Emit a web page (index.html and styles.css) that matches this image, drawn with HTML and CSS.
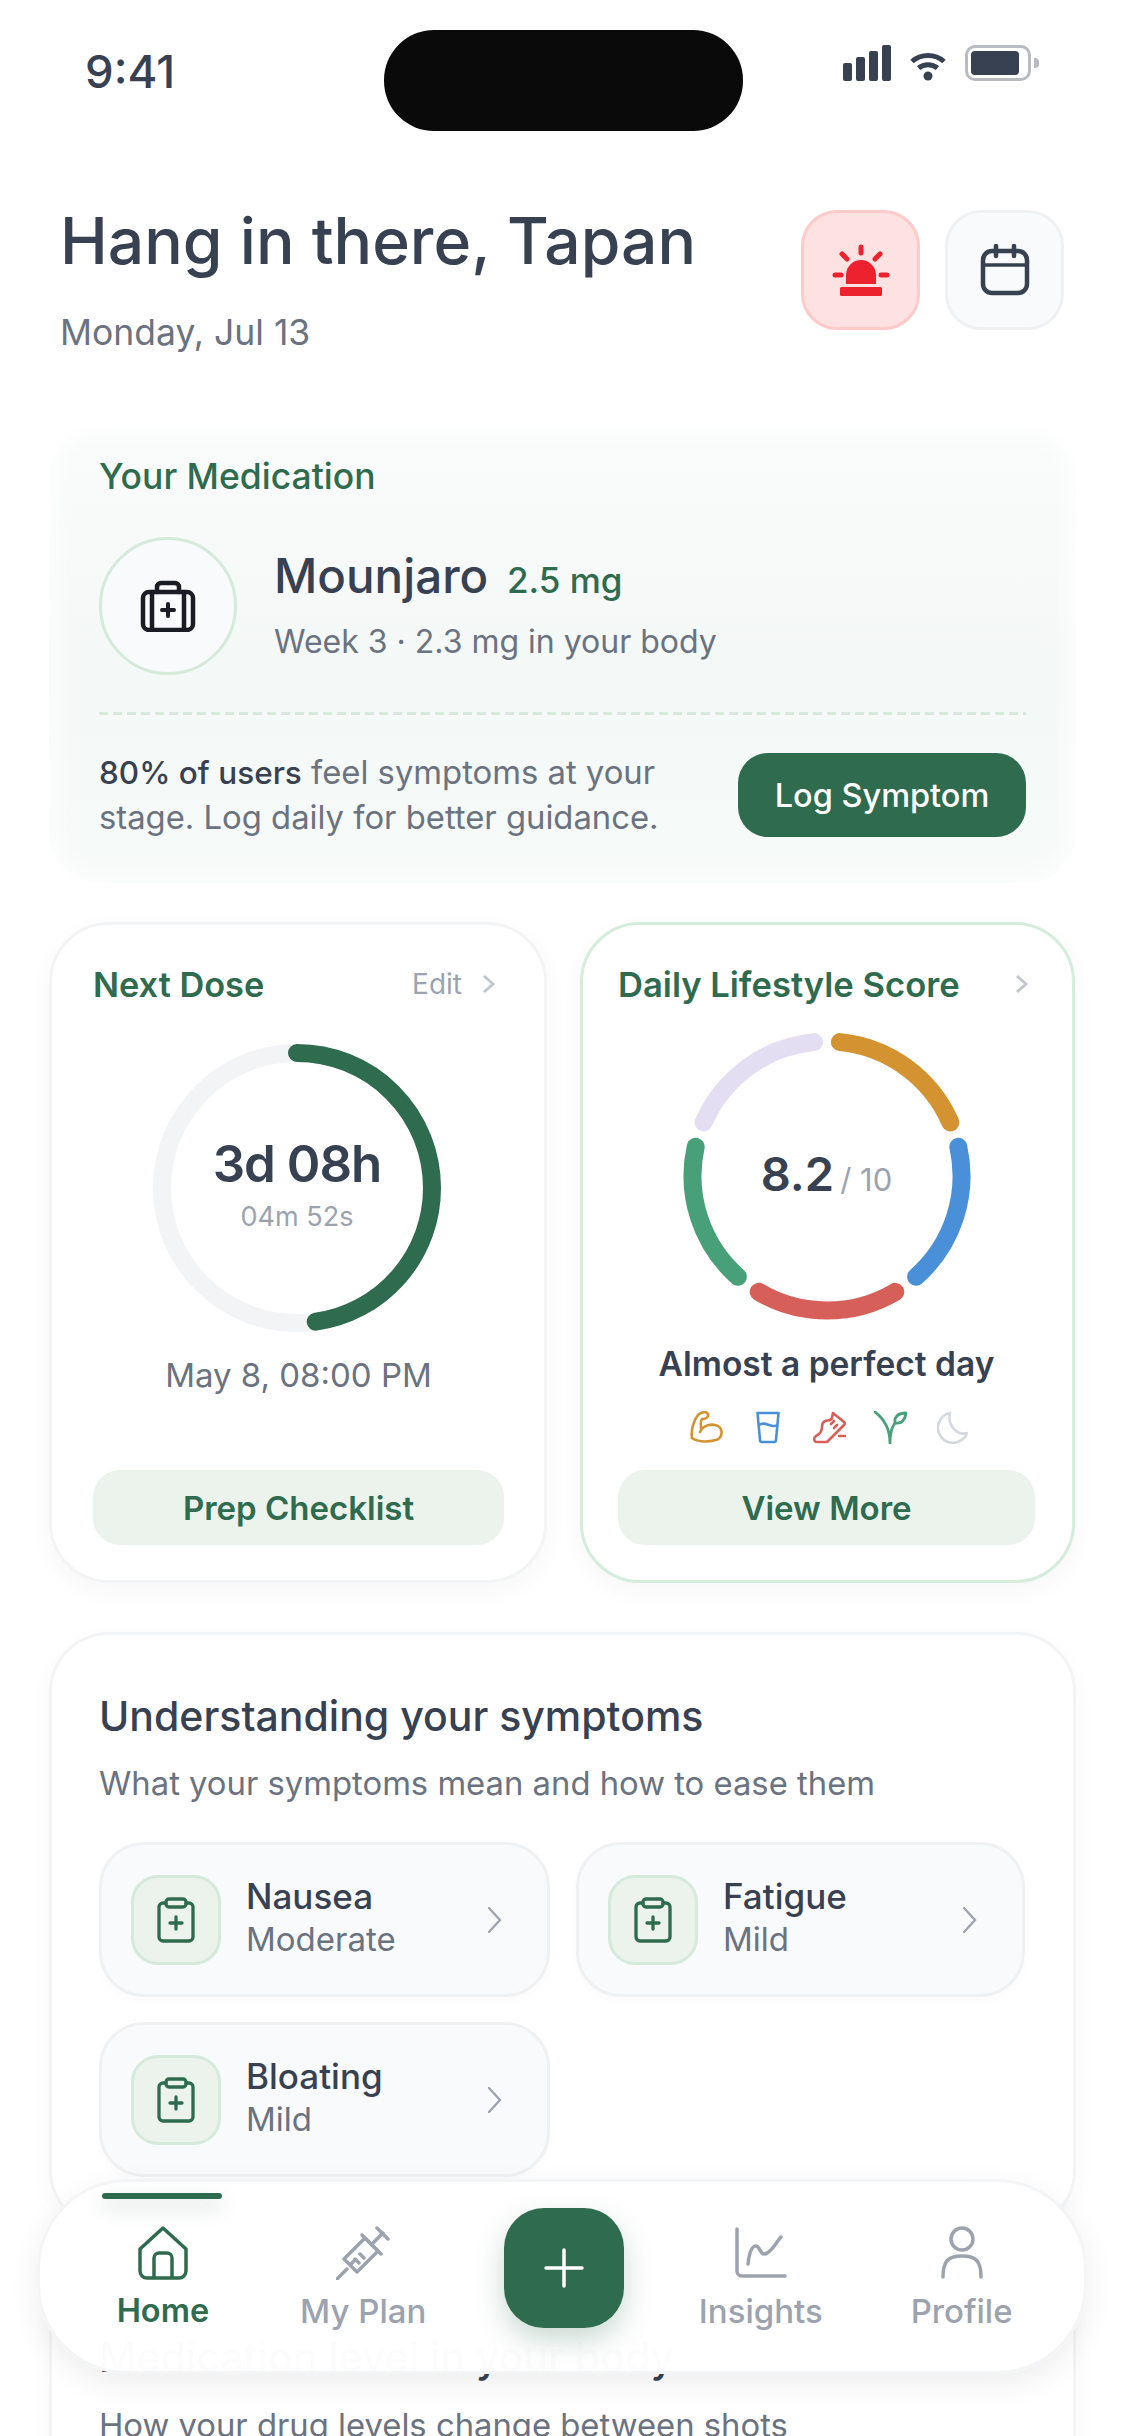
FILE: index.html
```html
<!DOCTYPE html>
<html lang="en">
<head>
<meta charset="utf-8">
<title>Home</title>
<link rel="stylesheet" href="styles.css">
</head>
<body>
<div class="screen">
  <div class="status">
    <div class="time">9:41</div>
    <div class="island"></div>
    <div class="status-icons">
      <svg class="signal" width="48" height="36" viewBox="0 0 48 36"><rect x="0" y="18" width="9" height="18" rx="2"/><rect x="13" y="12" width="9" height="24" rx="2"/><rect x="26" y="6" width="9" height="30" rx="2"/><rect x="39" y="0" width="9" height="36" rx="2"/></svg>
      <svg class="wifi" width="36" height="30" viewBox="0 0 36 30"><path d="M2 10.500C11 2.500 25 2.500 34 10.500M8.500 17C14 12.500 22 12.500 27.500 17" fill="none" stroke="#374151" stroke-width="5"/><circle cx="18" cy="25" r="4.500" fill="#374151"/></svg>
      <div class="battery"><div class="battery-fill"></div></div>
      <div class="battery-nub"></div>
    </div>
  </div>

  <header class="header">
    <div>
      <h1 class="greeting">Hang in there, Tapan</h1>
      <p class="date">Monday, Jul 13</p>
    </div>
    <div class="header-actions">
      <button class="icon-btn icon-btn-alert">
        <svg width="60" height="52" viewBox="0 0 60 52" fill="#ec222e"><path d="M15 40V31a15 15 0 0 1 30 0v9Z"/><rect x="9" y="43" width="42" height="9" rx="1.500"/><g stroke="#ec222e" stroke-width="5" stroke-linecap="round"><path d="M30 3v6M11 10l5 5M49 10l-5 5M4 31h6M50 31h6"/></g></svg>
      </button>
      <button class="icon-btn icon-btn-plain">
        <svg width="50" height="52" viewBox="0 0 50 52" fill="none" stroke="#374151" stroke-width="4.500" stroke-linecap="round"><rect x="3" y="7" width="44" height="42" rx="9"/><path d="M3 21h44" stroke-width="3.500"/><path d="M16 2v10M34 2v10"/></svg>
      </button>
    </div>
  </header>

  <section class="med-card">
    <div class="med-label">Your Medication</div>
    <div class="med-row">
      <div class="med-icon">
        <svg width="56" height="52" viewBox="0 0 56 52" fill="none" stroke="#1a1d24" stroke-width="4.500" stroke-linejoin="round" stroke-linecap="round"><rect x="3" y="12" width="50" height="38" rx="6"/><path d="M17 12V7a4 4 0 0 1 4-4h14a4 4 0 0 1 4 4v5M12 12v38M44 12v38"/><path d="M28 24v12M22 30h12" stroke-width="4"/></svg>
      </div>
      <div class="med-info">
        <div class="med-name">Mounjaro <span class="med-dose">2.5 mg</span></div>
        <div class="med-sub">Week 3 · 2.3 mg in your body</div>
      </div>
    </div>
    <div class="med-divider"></div>
    <div class="med-foot">
      <p class="med-note"><strong>80% of users</strong> feel symptoms at your stage. Log daily for better guidance.</p>
      <button class="btn-log">Log Symptom</button>
    </div>
  </section>

  <div class="duo">
    <section class="card dose-card">
      <div class="card-head">
        <span class="card-title">Next Dose</span>
        <span class="edit">Edit
          <svg class="chev-sm" width="14" height="20" viewBox="0 0 14 20" fill="none" stroke="#c3c7d0" stroke-width="3"><path d="M2 2l9 8-9 8"/></svg>
        </span>
      </div>
      <div class="ring ring-dose">
        <svg width="288" height="288" viewBox="0 0 288 288" fill="none" stroke-width="18"><circle cx="144" cy="144" r="135" stroke="#f3f4f6"/><circle class="arc" cx="144" cy="144" r="135" stroke="#2f6b4f" stroke-linecap="round" pathLength="360" stroke-dasharray="172 188"/></svg>
        <div class="ring-text">
          <div class="count">3d 08h</div>
          <div class="count-sub">04m 52s</div>
        </div>
      </div>
      <div class="dose-date">May 8, 08:00 PM</div>
      <button class="btn-soft">Prep Checklist</button>
    </section>

    <section class="card score-card">
      <div class="card-head">
        <span class="card-title card-title-long">Daily Lifestyle Score</span>
        <svg class="chev-sm" width="14" height="20" viewBox="0 0 14 20" fill="none" stroke="#c3c7d0" stroke-width="3"><path d="M2 2l9 8-9 8"/></svg>
      </div>
      <div class="ring ring-score">
        <svg width="288" height="288" viewBox="0 0 288 288" fill="none" stroke-width="18" stroke-linecap="round">
          <circle class="arc-a" cx="144" cy="144" r="134.500" stroke="#d39330" pathLength="360" stroke-dasharray="61 299"/>
          <circle class="arc-b" cx="144" cy="144" r="134.500" stroke="#4a90d9" pathLength="360" stroke-dasharray="61 299"/>
          <circle class="arc-c" cx="144" cy="144" r="134.500" stroke="#d65f59" pathLength="360" stroke-dasharray="61 299"/>
          <circle class="arc-d" cx="144" cy="144" r="134.500" stroke="#47a078" pathLength="360" stroke-dasharray="61 299"/>
          <circle class="arc-e" cx="144" cy="144" r="134.500" stroke="#e4def2" pathLength="360" stroke-dasharray="61 299"/>
        </svg>
        <div class="ring-text ring-text-score"><span class="score">8.2</span><span class="score-of">/ 10</span></div>
      </div>
      <div class="score-msg">Almost a perfect day</div>
      <div class="habit-row">
        <svg width="33" height="33" viewBox="0 0 33 33" fill="none" stroke="#d39330" stroke-width="2.600" stroke-linecap="round" stroke-linejoin="round"><path d="M2 27C1 20 3 10 8 4c3-3 9-4 10-1 1 4-3 5-6 5-2 2-1 6-1 9"/><path d="M10 21c3-7 12-9 18-6 5 3 5 12-2 14-8 2-18 2-24-2"/></svg>
        <svg class="hab-wide" width="24" height="33" viewBox="0 0 24 33" fill="none" stroke="#4a90d9" stroke-width="2.600" stroke-linejoin="round"><path d="M1.500 2h21L20 29a2 2 0 0 1-2 2H6a2 2 0 0 1-2-2Z"/><path d="M3 14c4-3 7-1 10 0 3 1 5 2 9 0"/></svg>
        <svg class="hab-wide" width="34" height="33" viewBox="0 0 34 33" fill="none" stroke="#d65f59" stroke-width="2.600" stroke-linecap="round" stroke-linejoin="round"><path d="M14 31H4c-3 0-4-4-1-6 4-2 6-4 6-9 0-2 1-5 3-6 3-1 6 0 7-3l1-5 11 9c1 1 1 2 0 3L14 31Z"/><path d="M18 13l3-3M21 17l3-3M26 25h6"/></svg>
        <svg class="hab-tight" width="33" height="33" viewBox="0 0 33 33" fill="none" stroke="#47a078" stroke-width="2.800" stroke-linecap="round" stroke-linejoin="round"><path d="M1 1c9 7 15 16 15 31M16 32c0-9 1-15 5-20"/><path d="M21 12c-1-7 4-10 11-10-1 7-4 11-11 10Z"/></svg>
        <svg width="31" height="33" viewBox="0 0 31 33" fill="none" stroke="#d5d8e0" stroke-width="2.600" stroke-linecap="round" stroke-linejoin="round"><path d="M13 2a15 15 0 1 0 17 20c-9 3-20-7-17-20Z"/></svg>
      </div>
      <button class="btn-soft">View More</button>
    </section>
  </div>

  <section class="panel">
    <h2 class="panel-title">Understanding your symptoms</h2>
    <p class="panel-sub">What your symptoms mean and how to ease them</p>
    <div class="tile-grid">
      <div class="tile">
        <div class="tile-icon"><svg width="38" height="46" viewBox="0 0 38 46" fill="none" stroke="#2f6b4f" stroke-width="3.300" stroke-linecap="round" stroke-linejoin="round"><path d="M9 6H6a4 4 0 0 0-4 4v30a4 4 0 0 0 4 4h26a4 4 0 0 0 4-4V10a4 4 0 0 0-4-4h-3"/><rect x="9" y="2" width="20" height="8" rx="3"/><path d="M19 20v12M13 26h12"/></svg></div>
        <div class="tile-text"><div class="tile-name">Nausea</div><div class="tile-level">Moderate</div></div>
        <svg class="tile-chev" width="16" height="28" viewBox="0 0 16 28" fill="none" stroke="#9ca3af" stroke-width="2.300" stroke-linecap="round"><path d="M2 2l11 12L2 26"/></svg>
      </div>
      <div class="tile">
        <div class="tile-icon"><svg width="38" height="46" viewBox="0 0 38 46" fill="none" stroke="#2f6b4f" stroke-width="3.300" stroke-linecap="round" stroke-linejoin="round"><path d="M9 6H6a4 4 0 0 0-4 4v30a4 4 0 0 0 4 4h26a4 4 0 0 0 4-4V10a4 4 0 0 0-4-4h-3"/><rect x="9" y="2" width="20" height="8" rx="3"/><path d="M19 20v12M13 26h12"/></svg></div>
        <div class="tile-text"><div class="tile-name">Fatigue</div><div class="tile-level">Mild</div></div>
        <svg class="tile-chev" width="16" height="28" viewBox="0 0 16 28" fill="none" stroke="#9ca3af" stroke-width="2.300" stroke-linecap="round"><path d="M2 2l11 12L2 26"/></svg>
      </div>
      <div class="tile">
        <div class="tile-icon"><svg width="38" height="46" viewBox="0 0 38 46" fill="none" stroke="#2f6b4f" stroke-width="3.300" stroke-linecap="round" stroke-linejoin="round"><path d="M9 6H6a4 4 0 0 0-4 4v30a4 4 0 0 0 4 4h26a4 4 0 0 0 4-4V10a4 4 0 0 0-4-4h-3"/><rect x="9" y="2" width="20" height="8" rx="3"/><path d="M19 20v12M13 26h12"/></svg></div>
        <div class="tile-text"><div class="tile-name">Bloating</div><div class="tile-level">Mild</div></div>
        <svg class="tile-chev" width="16" height="28" viewBox="0 0 16 28" fill="none" stroke="#9ca3af" stroke-width="2.300" stroke-linecap="round"><path d="M2 2l11 12L2 26"/></svg>
      </div>
    </div>
  </section>

  <section class="panel panel-next">
    <h2 class="panel-title">Medication level in your body</h2>
    <p class="panel-sub">How your drug levels change between shots</p>
  </section>

  <nav class="tabbar">
    <div class="tab-indicator"></div>
    <div class="tab tab-active">
      <svg width="52" height="54" viewBox="0 0 52 54" fill="none" stroke="#2f6b4f" stroke-width="3.500" stroke-linejoin="round"><path d="M3 23 26 2l23 21v22a7 7 0 0 1-7 7H10a7 7 0 0 1-7-7Z"/><path d="M17 52V32a5 5 0 0 1 5-5h8a5 5 0 0 1 5 5v20"/></svg>
      <span>Home</span>
    </div>
    <div class="tab">
      <svg width="54" height="54" viewBox="0 0 54 54" fill="none" stroke="#9ca3af" stroke-width="3.500" stroke-linecap="round" stroke-linejoin="round"><path d="M1 53l10-10M8 33l13 13 21-21-13-13ZM14 39l4-4M19 33l4 4M24 28l4 4"/><path d="M36 18 47 7M41 2l11 11M26 9l19 19"/></svg>
      <span>My Plan</span>
    </div>
    <div class="tab tab-fab">
      <button class="fab"><svg width="40" height="40" viewBox="0 0 40 40" stroke="#fff" stroke-width="3.500" stroke-linecap="round"><path d="M20 2v36M2 20h36"/></svg></button>
    </div>
    <div class="tab">
      <svg width="52" height="54" viewBox="0 0 52 54" fill="none" stroke="#9ca3af" stroke-width="3.500" stroke-linecap="round" stroke-linejoin="round"><path d="M2 3v42a5 5 0 0 0 5 5h43"/><path d="M13 38c1-9 3-18 8-18 4 0 4 9 9 8 7-2 11-12 16-17"/></svg>
      <span>Insights</span>
    </div>
    <div class="tab tab-last">
      <svg width="44" height="54" viewBox="0 0 44 54" fill="none" stroke="#9ca3af" stroke-width="3.500" stroke-linecap="round"><circle cx="22" cy="13" r="11"/><path d="M3 51c0-16 5-21 19-21s19 5 19 21"/></svg>
      <span>Profile</span>
    </div>
  </nav>
</div>
</body>
</html>
```
FILE: styles.css
```css
* { box-sizing: border-box; }
html, body { margin: 0; padding: 0; background: #fff; }
body { font-family: Inter, "Liberation Sans", sans-serif; color: #374151; }
h1, h2, p { margin: 0; font-weight: inherit; }
button { font-family: inherit; border: 0; padding: 0; cursor: pointer; }

.screen { position: relative; width: 1125px; height: 2436px; overflow: hidden; background: #fff; }

.status { display: flex; align-items: flex-start; padding: 30px 0 0 85px; }
.time { width: 299px; margin-top: 19px; font-size: 45.500px; line-height: 46px; font-weight: 500; color: #374151; }
.island { width: 359px; height: 101px; border-radius: 50px; background: #0a0a0a; }
.status-icons { display: flex; align-items: flex-end; margin: 15px 0 0 100px; height: 36px; }
.signal { fill: #374151; }
.wifi { margin: 0 19px; }
.battery { width: 66px; height: 36px; padding: 3px; border: 3px solid #b8bcc2; border-radius: 10px; }
.battery-fill { width: 48px; height: 24px; border-radius: 4px; background: #374151; }
.battery-nub { width: 5px; height: 10px; margin: 0 0 13px 3px; background: #b8bcc2; border-radius: 0 4px 4px 0; }

.header { display: flex; justify-content: space-between; align-items: flex-start; margin-top: 79px; padding: 0 61px 0 60px; }
.greeting { font-size: 64.200px; line-height: 62px; font-weight: 500; color: #374151; }
.date { margin-top: 41px; font-size: 35.500px; line-height: 40px; color: #6b7280; }
.header-actions { display: flex; gap: 25px; }
.icon-btn { display: flex; align-items: center; justify-content: center; width: 119px; height: 120px; border-radius: 36px; border-width: 3px; border-style: solid; }
.icon-btn-alert { background: #fee2e2; border-color: #fecaca; }
.icon-btn-plain { background: #f9fafb; border-color: #f0f1f3; }

.med-card { margin: 72px 49px 0; height: 458px; padding: 32px 50px 0; border-radius: 50px; background: linear-gradient(180deg, #fafcfb, #f4f8f6 50%, #f6faf8); box-shadow: inset 0 0 24px 6px rgba(255, 255, 255, .9); }
.med-label { font-size: 35.500px; line-height: 40px; font-weight: 500; color: #2f6b4f; }
.med-row { display: flex; align-items: center; gap: 37px; margin-top: 40px; }
.med-icon { display: flex; align-items: center; justify-content: center; width: 138px; height: 138px; border-radius: 50%; background: #f9fafb; border: 3px solid #d5eadb; }
.med-info { padding-bottom: 2px; }
.med-name { font-size: 47.500px; line-height: 56px; font-weight: 500; color: #374151; }
.med-dose { margin-left: 6px; font-size: 35px; color: #2f6b4f; }
.med-sub { margin-top: 14px; font-size: 32px; line-height: 40px; color: #6b7280; }
.med-divider { height: 3px; margin-top: 37px; background: repeating-linear-gradient(90deg, #d5eadb 0 9px, transparent 9px 14px); }
.med-foot { display: flex; align-items: center; justify-content: space-between; padding-top: 35px; }
.med-note { width: 620px; font-size: 32.800px; line-height: 45px; color: #6b7280; }
.med-note strong { font-size: 31.500px; font-weight: 500; color: #374151; }
.btn-log { width: 288px; height: 84px; border-radius: 30px; background: #2f6b4f; color: #fff; font-size: 32.500px; font-weight: 500; }

.duo { display: grid; grid-template-columns: 498px 495px; gap: 33px; margin: 39px 0 0 49px; height: 661px; }
.card { display: flex; flex-direction: column; padding: 39px 38px 35px; background: #fff; border-radius: 60px; border: 3px solid #f3f4f6; box-shadow: 0 8px 24px rgba(0, 0, 0, .035); }
.dose-card { padding-left: 41px; padding-right: 40px; }
.score-card { padding-left: 35px; padding-right: 37px; border-color: #d6ecdc; }
.card-head { display: flex; align-items: center; justify-content: space-between; height: 40px; }
.dose-card .card-head { padding-right: 8px; }
.score-card .card-head { padding-right: 6px; }
.card-title { font-size: 34.300px; font-weight: 600; color: #2f6b4f; }
.card-title-long { font-size: 34.600px; }
.edit { display: flex; align-items: center; gap: 20px; font-size: 28px; color: #9ca3af; }
.ring { position: relative; width: 288px; height: 288px; align-self: center; }
.ring-dose { margin: 40px 3px 0 0; }
.ring-score { margin-top: 28px; }
.arc { transform: rotate(-90deg); transform-origin: center; }
.arc-a { transform: rotate(-84.500deg); transform-origin: center; }
.arc-b { transform: rotate(-12.500deg); transform-origin: center; }
.arc-c { transform: rotate(59.500deg); transform-origin: center; }
.arc-d { transform: rotate(131.500deg); transform-origin: center; }
.arc-e { transform: rotate(203.500deg); transform-origin: center; }
.ring-text { position: absolute; inset: 0; display: flex; flex-direction: column; align-items: center; justify-content: center; padding-bottom: 8px; }
.ring-text-score { flex-direction: row; align-items: baseline; gap: 6px; padding-top: 112px; padding-bottom: 0; }
.count { font-size: 51px; line-height: 60px; font-weight: 600; letter-spacing: -1px; color: #374151; }
.count-sub { margin-top: 6px; font-size: 27px; line-height: 34px; color: #9ca3af; }
.dose-date { margin-top: 23px; text-align: center; font-size: 33px; line-height: 40px; color: #6b7280; }
.btn-soft { margin-top: auto; height: 75px; border-radius: 27px; background: #ebf3ec; color: #2f6b4f; font-size: 33px; font-weight: 600; }
.score { font-size: 47px; line-height: 60px; font-weight: 600; color: #374151; }
.score-of { font-size: 31px; color: #9ca3af; }
.score-msg { margin-top: 24px; text-align: center; font-size: 33.500px; line-height: 40px; font-weight: 600; color: #374151; }
.habit-row { display: flex; justify-content: center; align-items: center; gap: 30px; margin-top: 27px; padding-left: 4px; }
.hab-wide { margin-left: 3px; }
.hab-tight { margin-left: -3px; }

.panel { margin: 49px 49px 0; padding: 56px 47px 50px; background: #fff; border-radius: 60px; border: 3px solid #f3f4f6; box-shadow: 0 8px 24px rgba(0, 0, 0, .03); }
.panel-next { margin-top: 43px; height: 400px; }
.panel-title { font-size: 41px; line-height: 50px; font-weight: 500; color: #374151; }
.panel-sub { margin-top: 22px; font-size: 32.800px; line-height: 40px; color: #6b7280; }
.panel-next .panel-sub { margin-top: 23px; }
.tile-grid { display: grid; grid-template-columns: 451px 449px; gap: 25px 26px; margin-top: 39px; }
.tile { display: flex; align-items: center; gap: 25px; height: 155px; padding: 0 44px 0 29px; background: #f9fafb; border-radius: 45px; border: 3px solid #f0f1f3; box-shadow: 0 4px 10px rgba(0, 0, 0, .02); }
.tile-icon { flex: none; display: flex; align-items: center; justify-content: center; width: 90px; height: 90px; border-radius: 27px; background: #ebf3ec; border: 3px solid #d5eadb; }
.tile-text { flex: 1; padding-bottom: 5px; }
.tile-name { font-size: 35px; line-height: 44px; font-weight: 500; color: #374151; }
.tile-level { font-size: 33px; line-height: 42px; color: #6b7280; }

.tabbar { position: absolute; left: 37px; top: 2179px; width: 1050px; height: 195px; padding: 44px 25px 0; display: grid; grid-template-columns: repeat(5, 1fr); border-radius: 90px; background: rgba(255, 255, 255, .985); border: 3px solid #f4f5f7; box-shadow: 0 10px 30px rgba(0, 0, 0, .07); }
.tab-indicator { position: absolute; left: 62px; top: 11px; width: 120px; height: 6px; border-radius: 3px; background: #2f6b4f; box-shadow: 0 8px 18px rgba(47, 107, 79, .25); }
.tab { display: flex; flex-direction: column; align-items: center; gap: 11px; font-size: 33px; line-height: 40px; font-weight: 500; color: #9ca3af; }
.tab-active { padding-right: 3px; color: #2f6b4f; font-size: 32.500px; font-weight: 600; }
.tab-last { padding-left: 4px; }
.tab-fab { margin-top: -18px; padding-left: 4px; }
.fab { display: flex; align-items: center; justify-content: center; width: 120px; height: 120px; border-radius: 40px; background: #2f6b4f; box-shadow: 0 12px 28px rgba(47, 107, 79, .25); }
```
